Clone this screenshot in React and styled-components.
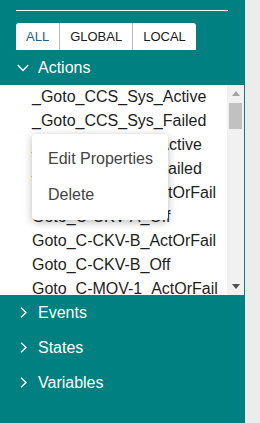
import React from "react";
import styled, { createGlobalStyle } from "styled-components";

const GlobalStyle = createGlobalStyle`
  html, body { margin: 0; padding: 0; background: #ececec; }
  body { font-family: "Liberation Sans", Arial, sans-serif; }
`;

const Panel = styled.div`
  width: 245px;
  height: 423px;
  background: #008080;
  display: flex;
  flex-direction: column;
  overflow: hidden;
`;

const Rule = styled.div`
  height: 1px;
  background: #ffffff;
  margin: 10px 16px 0 16px;
  width: 212px;
`;

const Tabs = styled.div`
  display: flex;
  margin: 12px 0 0 16px;
`;

const Tab = styled.div`
  height: 27px;
  padding: 0 10px;
  display: flex;
  align-items: center;
  background: #ffffff;
  font-size: 13px;
  color: ${(p) => (p.$active ? "#1e5f86" : "#1a1a1a")};
  border-left: ${(p) => (p.$first ? "none" : "1px solid #b8b8b8")};
  border-top-left-radius: ${(p) => (p.$first ? "3px" : "0")};
  border-top-right-radius: ${(p) => (p.$last ? "3px" : "0")};
`;

const Header = styled.div`
  height: 35px;
  display: flex;
  align-items: center;
  padding-left: 16px;
  color: #ffffff;
  font-size: 16px;
`;

const IconBox = styled.span`
  width: 14px;
  height: 14px;
  display: flex;
  align-items: center;
  justify-content: center;
  margin-right: 8px;
`;

const ListArea = styled.div`
  position: relative;
  height: 210px;
  margin-right: 1px;
  display: flex;
`;

const Items = styled.div`
  flex: 1;
  background: #ffffff;
  overflow: hidden;
`;

const Item = styled.div`
  height: 24px;
  line-height: 24px;
  padding-left: 32px;
  font-size: 16px;
  color: #1e1e1e;
  white-space: nowrap;
`;

const Scrollbar = styled.div`
  width: 17px;
  background: #f1f1f1;
  display: flex;
  flex-direction: column;
`;

const ScrollButton = styled.div`
  height: 17px;
  display: flex;
  align-items: center;
  justify-content: center;
`;

const Track = styled.div`
  flex: 1;
  display: flex;
  flex-direction: column;
`;

const Thumb = styled.div`
  height: 26px;
  margin: 1px 2px 0 2px;
  background: #c1c1c1;
`;

const Menu = styled.div`
  position: absolute;
  left: 32px;
  top: 49px;
  width: 136px;
  padding: 7px 0;
  background: #ffffff;
  border-radius: 4px;
  box-shadow: 0 2px 8px rgba(0, 0, 0, 0.28);
`;

const MenuItem = styled.div`
  height: 36px;
  line-height: 36px;
  padding-left: 16px;
  font-size: 16px;
  color: #444444;
`;

const ChevronDown = () => (
  <svg width="12" height="8" viewBox="0 0 12 8">
    <polyline points="0.8,1 6,6.4 11.2,1" fill="none" stroke="#fff" strokeWidth="1.4" />
  </svg>
);

const ChevronRight = () => (
  <svg width="7" height="11" viewBox="0 0 7 11">
    <polyline points="1,0.8 6,5.5 1,10.2" fill="none" stroke="#fff" strokeWidth="1.4" />
  </svg>
);

const Arrow = ({ up, color }) => (
  <svg width="8" height="5" viewBox="0 0 8 5">
    <polygon points={up ? "0,5 8,5 4,0" : "0,0 8,0 4,5"} fill={color} />
  </svg>
);

const actions = [
  "_Goto_CCS_Sys_Active",
  "_Goto_CCS_Sys_Failed",
  "_Goto_C-CKV-A_Active",
  "_Goto_C-CKV-A_Failed",
  "Goto_C-CKV-A_ActOrFail",
  "Goto_C-CKV-A_Off",
  "Goto_C-CKV-B_ActOrFail",
  "Goto_C-CKV-B_Off",
  "Goto_C-MOV-1_ActOrFail",
];

export default function App() {
  return (
    <>
      <GlobalStyle />
      <Panel>
        <Rule />
        <Tabs>
          <Tab $first $active>ALL</Tab>
          <Tab>GLOBAL</Tab>
          <Tab $last>LOCAL</Tab>
        </Tabs>
        <Header>
          <IconBox><ChevronDown /></IconBox>
          Actions
        </Header>
        <ListArea>
          <Items>
            {actions.map((a) => (
              <Item key={a}>{a}</Item>
            ))}
          </Items>
          <Scrollbar>
            <ScrollButton><Arrow up color="#a3a3a3" /></ScrollButton>
            <Track><Thumb /></Track>
            <ScrollButton><Arrow color="#505050" /></ScrollButton>
          </Scrollbar>
          <Menu>
            <MenuItem>Edit Properties</MenuItem>
            <MenuItem>Delete</MenuItem>
          </Menu>
        </ListArea>
        {["Events", "States", "Variables"].map((s) => (
          <Header key={s}>
            <IconBox><ChevronRight /></IconBox>
            {s}
          </Header>
        ))}
      </Panel>
    </>
  );
}
